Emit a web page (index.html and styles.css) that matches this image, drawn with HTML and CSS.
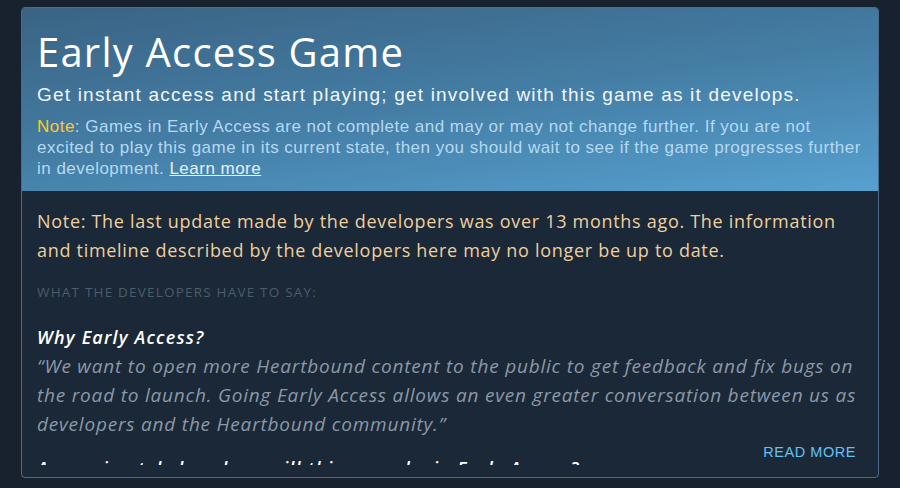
FILE: index.html
```html
<!DOCTYPE html>
<html lang="en">
<head>
    <meta charset="UTF-8">
    <meta name="viewport" content="width=device-width, initial-scale=1.0">
    <title>Early Access Game</title>
    <link rel="stylesheet" href="styles.css">
</head>
<body>
    <div class="page">
        <div class="ea-box">
            <div class="ea-header">
                <h1>Early Access Game</h1>
                <div class="ea-subtitle">Get instant access and start playing; get involved with this game as it develops.</div>
                <div class="ea-note"><span class="note-label">Note</span>: Games in Early Access are not complete and may or may not change further. If you are not excited to play this game in its current state, then you should wait to see if the game progresses further in development. <a href="#" class="learn-more">Learn more</a></div>
            </div>
            <div class="ea-body">
                <div class="ea-content">
                    <p class="update-note">Note: The last update made by the developers was over 13 months ago. The information and timeline described by the developers here may no longer be up to date.</p>
                    <div class="dev-label">What the developers have to say:</div>
                    <h2>Why Early Access?</h2>
                    <p class="quote">“We want to open more Heartbound content to the public to get feedback and fix bugs on the road to launch. Going Early Access allows an even greater conversation between us as developers and the Heartbound community.”</p>
                    <h2 class="next">Approximately how long will this game be in Early Access?</h2>
                    <p class="quote">“We expect the game to be in Early Access for a while.”</p>
                </div>
                <a href="#" class="read-more">READ MORE</a>
            </div>
        </div>
    </div>
</body>
</html>
```

FILE: styles.css
```css
body {
    margin: 0;
    background-color: #172130;
    font-family: "Liberation Sans", Arial, sans-serif;
}
.page {
    width: 880px;
    height: 488px;
    padding: 7px 0 0 21px;
    box-sizing: border-box;
    background-color: #18222f;
}
.ea-box {
    width: 856px;
    border: 1px solid #4c6b8c;
    border-radius: 4px;
    overflow: hidden;
    background-color: #1b2838;
}
.ea-header {
    height: 183px;
    box-sizing: border-box;
    padding: 20px 10px 0 15px;
    background: linear-gradient(172deg, #3a6384 0%, #447da4 50%, #56a1d0 100%);
}
h1 {
    margin: 0;
    font-family: "Open Sans", sans-serif;
    font-weight: 400;
    font-size: 40px;
    line-height: 48px;
    letter-spacing: 1.2px;
    color: #ffffff;
}
.ea-subtitle {
    margin-top: 8px;
    font-size: 19px;
    line-height: 22px;
    letter-spacing: 1.2px;
    color: #f2f6fa;
}
.ea-note {
    margin-top: 10px;
    font-size: 17px;
    line-height: 21px;
    letter-spacing: 0.48px;
    color: #b5d9f3;
}
.note-label {
    color: #ffc82c;
}
.learn-more {
    color: #e3f1fb;
    text-decoration: underline;
}
.ea-body {
    position: relative;
    padding: 0 10px 12px 15px;
}
.ea-content {
    height: 274px;
    overflow: hidden;
    font-family: "Open Sans", sans-serif;
}
.update-note {
    margin: 16px 0 0 0;
    font-size: 18px;
    line-height: 29px;
    letter-spacing: 0.7px;
    color: #efcf9d;
}
.dev-label {
    margin-top: 18px;
    font-size: 13.5px;
    line-height: 18px;
    letter-spacing: 1.2px;
    text-transform: uppercase;
    color: #4d5c6b;
}
h2 {
    margin: 23px 0 0 0;
    font-size: 18px;
    font-style: italic;
    font-weight: 600;
    line-height: 26px;
    letter-spacing: 1.2px;
    color: #ffffff;
}
h2.next {
    margin-top: 16px;
}
.quote {
    margin: 2px 0 0 0;
    font-size: 19px;
    font-style: italic;
    line-height: 29px;
    letter-spacing: 0.8px;
    color: #8b98a6;
}
.read-more {
    position: absolute;
    right: 22px;
    bottom: 17px;
    font-size: 14.5px;
    letter-spacing: 0.55px;
    color: #66c0f4;
    text-decoration: none;
}
```
